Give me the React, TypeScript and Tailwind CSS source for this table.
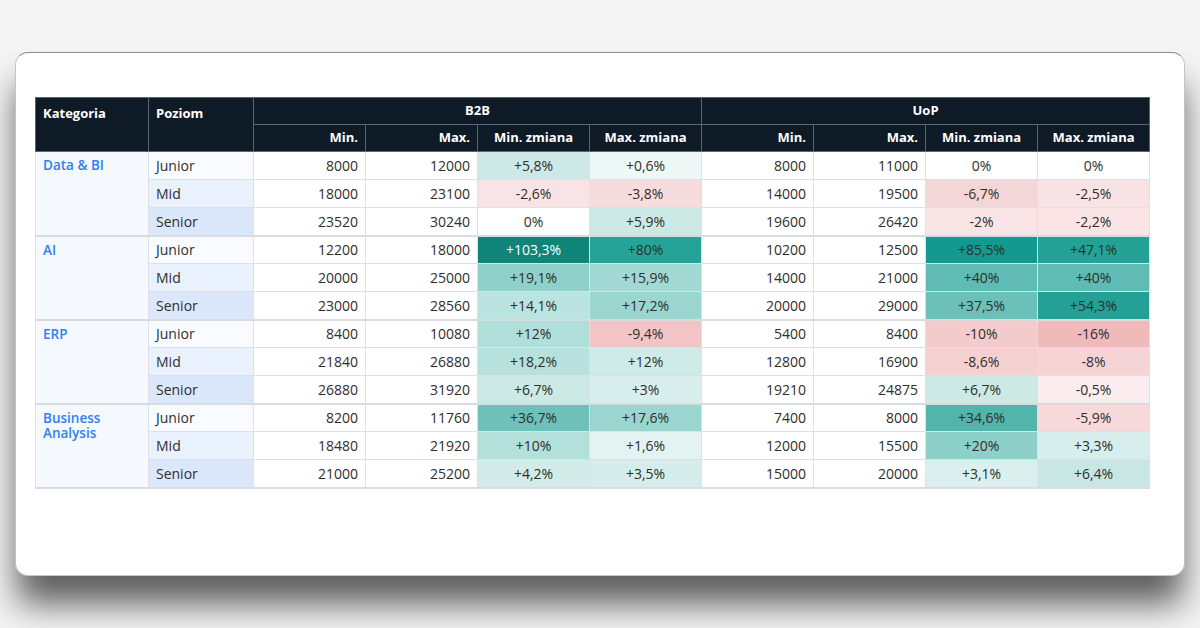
type Cell = { v: string; bg: string; light?: boolean }

type Row = {
  level: string
  levelBg: string
  b2b: [string, string]
  b2bChg: [Cell, Cell]
  uop: [string, string]
  uopChg: [Cell, Cell]
}

type Group = { name: string; rows: Row[] }

const W = "bg-white"
const JUNIOR = "bg-[#f8fbff]"
const MID = "bg-[#e9f1fc]"
const SENIOR = "bg-[#dbe8fb]"

const groups: Group[] = [
  {
    name: "Data & BI",
    rows: [
      {
        level: "Junior",
        levelBg: JUNIOR,
        b2b: ["8000", "12000"],
        b2bChg: [{ v: "+5,8%", bg: "bg-[#cde9e7]" }, { v: "+0,6%", bg: "bg-[#eef8f6]" }],
        uop: ["8000", "11000"],
        uopChg: [{ v: "0%", bg: W }, { v: "0%", bg: W }],
      },
      {
        level: "Mid",
        levelBg: MID,
        b2b: ["18000", "23100"],
        b2bChg: [{ v: "-2,6%", bg: "bg-[#f9e3e4]" }, { v: "-3,8%", bg: "bg-[#f7dcdd]" }],
        uop: ["14000", "19500"],
        uopChg: [{ v: "-6,7%", bg: "bg-[#f5d6d7]" }, { v: "-2,5%", bg: "bg-[#f9e2e3]" }],
      },
      {
        level: "Senior",
        levelBg: SENIOR,
        b2b: ["23520", "30240"],
        b2bChg: [{ v: "0%", bg: W }, { v: "+5,9%", bg: "bg-[#cce9e6]" }],
        uop: ["19600", "26420"],
        uopChg: [{ v: "-2%", bg: "bg-[#fae5e6]" }, { v: "-2,2%", bg: "bg-[#fae4e5]" }],
      },
    ],
  },
  {
    name: "AI",
    rows: [
      {
        level: "Junior",
        levelBg: JUNIOR,
        b2b: ["12200", "18000"],
        b2bChg: [
          { v: "+103,3%", bg: "bg-[#0f8579]", light: true },
          { v: "+80%", bg: "bg-[#26a397]" },
        ],
        uop: ["10200", "12500"],
        uopChg: [{ v: "+85,5%", bg: "bg-[#129990]" }, { v: "+47,1%", bg: "bg-[#24a296]" }],
      },
      {
        level: "Mid",
        levelBg: MID,
        b2b: ["20000", "25000"],
        b2bChg: [{ v: "+19,1%", bg: "bg-[#8fd0ca]" }, { v: "+15,9%", bg: "bg-[#a3d9d4]" }],
        uop: ["14000", "21000"],
        uopChg: [{ v: "+40%", bg: "bg-[#5fbbb3]" }, { v: "+40%", bg: "bg-[#5fbbb3]" }],
      },
      {
        level: "Senior",
        levelBg: SENIOR,
        b2b: ["23000", "28560"],
        b2bChg: [{ v: "+14,1%", bg: "bg-[#bbe3df]" }, { v: "+17,2%", bg: "bg-[#9bd5cf]" }],
        uop: ["20000", "29000"],
        uopChg: [{ v: "+37,5%", bg: "bg-[#6bc0b9]" }, { v: "+54,3%", bg: "bg-[#23a196]" }],
      },
    ],
  },
  {
    name: "ERP",
    rows: [
      {
        level: "Junior",
        levelBg: JUNIOR,
        b2b: ["8400", "10080"],
        b2bChg: [{ v: "+12%", bg: "bg-[#b0dfda]" }, { v: "-9,4%", bg: "bg-[#f3c4c5]" }],
        uop: ["5400", "8400"],
        uopChg: [{ v: "-10%", bg: "bg-[#f4cbcc]" }, { v: "-16%", bg: "bg-[#f0b9ba]" }],
      },
      {
        level: "Mid",
        levelBg: MID,
        b2b: ["21840", "26880"],
        b2bChg: [{ v: "+18,2%", bg: "bg-[#b6e1dd]" }, { v: "+12%", bg: "bg-[#cfebe8]" }],
        uop: ["12800", "16900"],
        uopChg: [{ v: "-8,6%", bg: "bg-[#f5d0d1]" }, { v: "-8%", bg: "bg-[#f6d3d4]" }],
      },
      {
        level: "Senior",
        levelBg: SENIOR,
        b2b: ["26880", "31920"],
        b2bChg: [{ v: "+6,7%", bg: "bg-[#cde9e6]" }, { v: "+3%", bg: "bg-[#d9efed]" }],
        uop: ["19210", "24875"],
        uopChg: [{ v: "+6,7%", bg: "bg-[#cde9e6]" }, { v: "-0,5%", bg: "bg-[#fbeced]" }],
      },
    ],
  },
  {
    name: "Business Analysis",
    rows: [
      {
        level: "Junior",
        levelBg: JUNIOR,
        b2b: ["8200", "11760"],
        b2bChg: [{ v: "+36,7%", bg: "bg-[#6dc1ba]" }, { v: "+17,6%", bg: "bg-[#9bd5cf]" }],
        uop: ["7400", "8000"],
        uopChg: [{ v: "+34,6%", bg: "bg-[#52b5ac]" }, { v: "-5,9%", bg: "bg-[#f7d9da]" }],
      },
      {
        level: "Mid",
        levelBg: MID,
        b2b: ["18480", "21920"],
        b2bChg: [{ v: "+10%", bg: "bg-[#b4e0dc]" }, { v: "+1,6%", bg: "bg-[#e3f3f1]" }],
        uop: ["12000", "15500"],
        uopChg: [{ v: "+20%", bg: "bg-[#8dd0c9]" }, { v: "+3,3%", bg: "bg-[#d8eeec]" }],
      },
      {
        level: "Senior",
        levelBg: SENIOR,
        b2b: ["21000", "25200"],
        b2bChg: [{ v: "+4,2%", bg: "bg-[#d3ece9]" }, { v: "+3,5%", bg: "bg-[#d6eeeb]" }],
        uop: ["15000", "20000"],
        uopChg: [{ v: "+3,1%", bg: "bg-[#dbf0ee]" }, { v: "+6,4%", bg: "bg-[#c8e7e4]" }],
      },
    ],
  },
]

const th = "border border-[#5b6570] text-white font-bold text-[13px] px-[7px]"
const td = "border border-[#dde1e5] text-[14px] text-[#2e2e2e] px-[7px] h-[28px]"

function Num({ v }: { v: string }) {
  return <td className={`${td} bg-white text-right`}>{v}</td>
}

function Chg({ c }: { c: Cell }) {
  return (
    <td className={`${td} ${c.bg} text-center ${c.light ? "text-white" : ""}`}>
      {c.v}
    </td>
  )
}

export default function App() {
  return (
    <div
      className="w-[1200px] h-[628px] bg-[#f4f4f4] overflow-hidden pt-[52px] px-[15px]"
      style={{ fontFamily: '"Open Sans", "Liberation Sans", sans-serif' }}
    >
      <div className="h-[524px] bg-white rounded-[13px] border border-[#c4c4c4] border-t-[#8f8f8f] shadow-[0_30px_34px_-2px_rgba(0,0,0,0.62)] pt-[44px] pl-[19px]">
        <table className="table-fixed border-collapse w-[1114px]">
          <colgroup>
            <col className="w-[113px]" />
            <col className="w-[105px]" />
            {Array.from({ length: 8 }).map((_, i) => (
              <col key={i} className="w-[112px]" />
            ))}
          </colgroup>
          <thead className="bg-[#0f1a27]">
            <tr className="h-[27px]">
              <th rowSpan={2} className={`${th} text-left align-top pt-[6px]`}>
                Kategoria
              </th>
              <th rowSpan={2} className={`${th} text-left align-top pt-[6px]`}>
                Poziom
              </th>
              <th colSpan={4} className={`${th} text-center`}>
                B2B
              </th>
              <th colSpan={4} className={`${th} text-center`}>
                UoP
              </th>
            </tr>
            <tr className="h-[27px]">
              <th className={`${th} text-right`}>Min.</th>
              <th className={`${th} text-right`}>Max.</th>
              <th className={`${th} text-center`}>Min. zmiana</th>
              <th className={`${th} text-center`}>Max. zmiana</th>
              <th className={`${th} text-right`}>Min.</th>
              <th className={`${th} text-right`}>Max.</th>
              <th className={`${th} text-center`}>Min. zmiana</th>
              <th className={`${th} text-center`}>Max. zmiana</th>
            </tr>
          </thead>
          {groups.map((g) => (
            <tbody key={g.name} className="border-b-2 border-[#d8dce0]">
              {g.rows.map((r, i) => (
                <tr key={r.level}>
                  {i === 0 && (
                    <td
                      rowSpan={3}
                      className="border border-[#dde1e5] bg-[#f5f9fe] align-top px-[7px] pt-[6px] text-[13.5px] font-semibold leading-[15px] text-[#2f7ff5]"
                    >
                      {g.name}
                    </td>
                  )}
                  <td className={`${td} ${r.levelBg}`}>{r.level}</td>
                  <Num v={r.b2b[0]} />
                  <Num v={r.b2b[1]} />
                  <Chg c={r.b2bChg[0]} />
                  <Chg c={r.b2bChg[1]} />
                  <Num v={r.uop[0]} />
                  <Num v={r.uop[1]} />
                  <Chg c={r.uopChg[0]} />
                  <Chg c={r.uopChg[1]} />
                </tr>
              ))}
            </tbody>
          ))}
        </table>
      </div>
    </div>
  )
}
